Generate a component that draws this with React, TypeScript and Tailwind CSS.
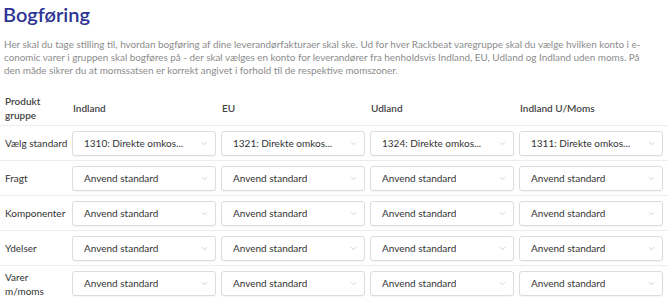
import { ChevronDown } from 'lucide-react';

const columns = ['Indland', 'EU', 'Udland', 'Indland U/Moms'];

const rows: { label: string[]; values: string[] }[] = [
  {
    label: ['Vælg standard'],
    values: ['1310: Direkte omkos...', '1321: Direkte omkos...', '1324: Direkte omkos...', '1311: Direkte omkos...'],
  },
  { label: ['Fragt'], values: Array(4).fill('Anvend standard') },
  { label: ['Komponenter'], values: Array(4).fill('Anvend standard') },
  { label: ['Ydelser'], values: Array(4).fill('Anvend standard') },
  { label: ['Varer', 'm/moms'], values: Array(4).fill('Anvend standard') },
];

function SelectBox({ value }: { value: string }) {
  return (
    <div className="flex h-[25px] items-center justify-between rounded-[3px] border border-[#dcdcdc] bg-white pl-[11px] pr-[6px] shadow-[0_1px_1px_rgba(0,0,0,0.04)]">
      <span className="truncate text-[10px] text-[#333]">{value}</span>
      <ChevronDown className="h-[9px] w-[9px] shrink-0 text-[#b0b0b0]" strokeWidth={1.5} />
    </div>
  );
}

export default function App() {
  return (
    <div className="h-[306px] w-[670px] overflow-hidden bg-white font-['Lato',sans-serif]">
      <h1 className="pl-[3px] text-[20px] leading-[28px] font-semibold text-[#2d3494]">Bogføring</h1>
      <p className="mt-[10px] whitespace-nowrap px-[4px] text-[9.9px] leading-[13px] text-[#8c8c8c]">
        Her skal du tage stilling til, hvordan bogføring af dine leverandørfakturaer skal ske. Ud for hver Rackbeat varegruppe skal du vælge hvilken konto i e-
        <br />
        conomic varer i gruppen skal bogføres på - der skal vælges en konto for leverandører fra henholdsvis Indland, EU, Udland og Indland uden moms. På
        <br />
        den måde sikrer du at momssatsen er korrekt angivet i forhold til de respektive momszoner.
      </p>

      <div className="mt-[14px] w-[668px]">
        <div className="grid h-[35px] grid-cols-[67px_repeat(4,144px)] items-center gap-x-[5px] border-b border-[#ececec]">
          <div className="pl-[5px] text-[10px] leading-[14px] font-semibold text-[#444]">
            Produkt
            <br />
            gruppe
          </div>
          {columns.map((c) => (
            <div key={c} className="pl-[1px] text-[10px] font-semibold text-[#444]">
              {c}
            </div>
          ))}
        </div>

        {rows.map((r, i) => (
          <div
            key={r.label[0]}
            className={
              i < rows.length - 1
                ? 'grid h-[35px] grid-cols-[67px_repeat(4,144px)] items-center gap-x-[5px] border-b border-[#ececec]'
                : 'grid h-[35px] grid-cols-[67px_repeat(4,144px)] items-center gap-x-[5px]'
            }
          >
            <div className="whitespace-nowrap pl-[5px] text-[10px] leading-[14px] text-[#333]">
              {r.label.map((l, k) => (
                <div key={k}>{l}</div>
              ))}
            </div>
            {r.values.map((v, j) => (
              <SelectBox key={j} value={v} />
            ))}
          </div>
        ))}
      </div>
    </div>
  );
}
